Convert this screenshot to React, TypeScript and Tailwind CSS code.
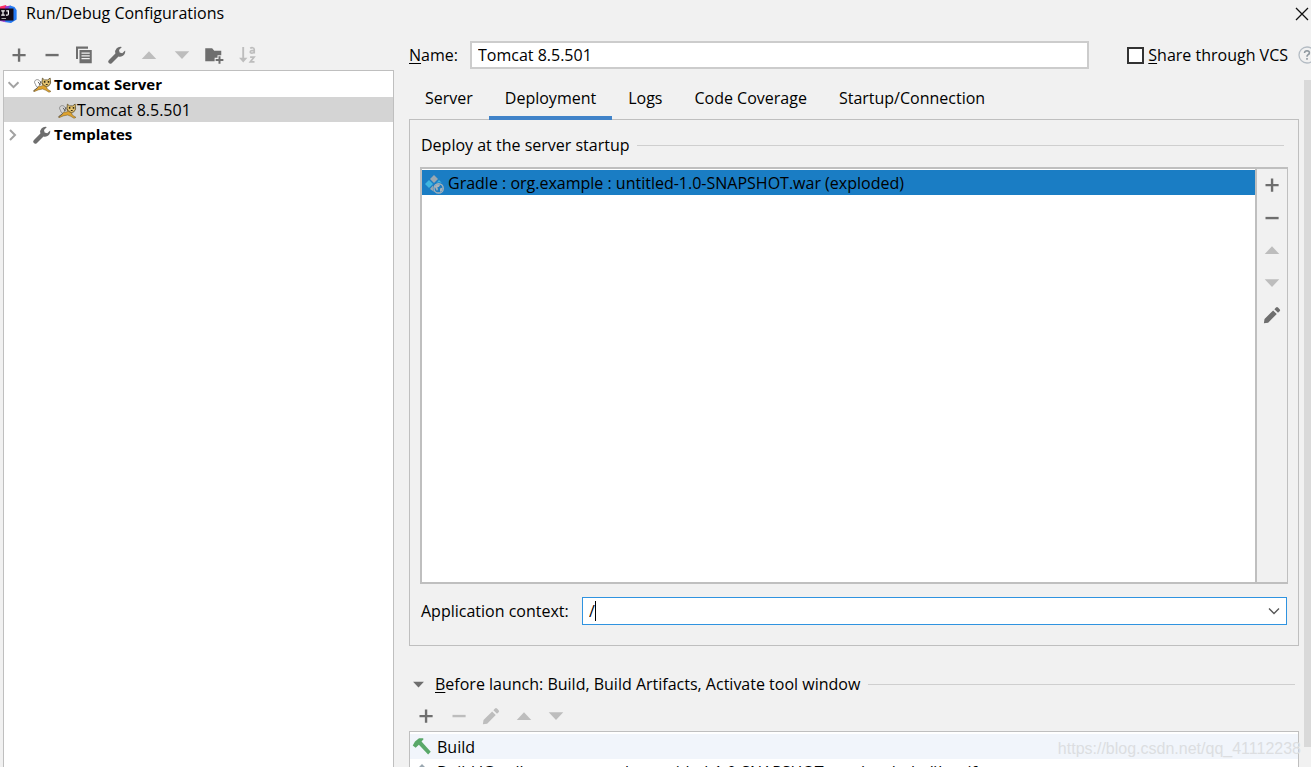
import { useState, type ReactNode } from "react";

type IconProps = { className?: string };

const Svg = ({ children, className = "size-5" }: { children: ReactNode; className?: string }) => (
  <svg viewBox="0 0 16 16" aria-hidden="true" className={"block shrink-0 " + className}>
    {children}
  </svg>
);

const PlusIcon = ({ className }: IconProps) => (
  <Svg className={className}>
    <path fill="currentColor" d="M7.1 2.8h1.9v4.3h4.3v1.9H9v4.3H7.1V9H2.8V7.1h4.3z" />
  </Svg>
);

const MinusIcon = ({ className }: IconProps) => (
  <Svg className={className}>
    <path fill="currentColor" d="M2.8 7.1h10.5V9H2.8z" />
  </Svg>
);

const CopyIcon = ({ className }: IconProps) => (
  <Svg className={className}>
    <path fill="currentColor" d="M1.6 1.2h9.6v1.7H3.2v8.2H1.6z" />
    <path
      fill="currentColor"
      fillRule="evenodd"
      d="M4.4 4h9.8v10.6H4.4zM6 6v1h6.6V6zM6 8.2v1h6.6v-1zM6 10.4v1h6.6v-1z"
    />
  </Svg>
);

const WrenchIcon = ({ className }: IconProps) => (
  <Svg className={className}>
    <path
      fill="currentColor"
      d="M14.5 4.3 12.2 6.5 10.1 6 9.6 3.900 11.900 1.600A4.200 4.200 0 0 0 6.700 6.800L1.400 12.100a1.700 1.700 0 0 0 2.400 2.400L9.200 9.200A4.200 4.200 0 0 0 14.500 4.300z"
    />
  </Svg>
);

const UpIcon = ({ className }: IconProps) => (
  <Svg className={className}>
    <path fill="currentColor" d="M8 5 13.800 11.200H2.200z" />
  </Svg>
);

const DownIcon = ({ className }: IconProps) => (
  <Svg className={className}>
    <path fill="currentColor" d="M2.200 5H13.800L8 11.200z" />
  </Svg>
);

const FolderAddIcon = ({ className }: IconProps) => (
  <Svg className={className}>
    <path fill="currentColor" d="M1 2.500h5.500L8.200 4.500H13.800V8.200H10.800V10.200H8.500V13H1z" />
    <path fill="currentColor" d="M11.600 9h1.600v2.200h2.300v1.600h-2.300V15h-1.600v-2.200H9.300v-1.600h2.300z" />
  </Svg>
);

const SortIcon = ({ className }: IconProps) => (
  <Svg className={className}>
    <path fill="currentColor" d="M4.200 1.500h1.500V10.200H8.300L5 14 1.600 10.200H4.200z" />
    <path
      fill="none"
      stroke="currentColor"
      strokeWidth="1.300"
      d="M10.600 2.700C11.300 2 13.800 1.700 13.800 3.500V6.800M13.800 4.300C11.500 4.200 10.600 4.700 10.600 5.500 10.600 6.900 13 6.800 13.800 5.500M10.500 9.700H13.700L10.600 13.500H14"
    />
  </Svg>
);

const PencilIcon = ({ className }: IconProps) => (
  <Svg className={className}>
    <path
      fill="currentColor"
      d="M1.500 14.500 2 11.200 8.900 4.300 11.800 7.200 4.900 14.100zM9.900 3.300 11.200 2Q12 1.200 12.800 2L14.100 3.300Q14.900 4.100 14.100 4.900L12.800 6.200z"
    />
  </Svg>
);

const TomcatIcon = ({ className }: IconProps) => (
  <Svg className={className}>
    <path d="M4.600 9.800C2.800 9.200 3.200 7.800 2.400 6.800 1.400 5.400 2.600 3.600 4.400 3.700 5.800 3.800 6.400 5.200 7.600 6.200" fill="none" stroke="#8a8a8a" strokeWidth=".8" />
    <path d="M7.800 6.500 8.600 8.500 5 9.200 4.200 10.600 1.200 12.600 1.700 13.300 5 11.900 8.500 11.200 11 12.200 13.600 13.800 15.200 13.100 12.200 11.200 11.600 9.300z" fill="#dfa32f" stroke="#6b5322" strokeWidth=".4" />
    <path d="M8.300 2.500 10 3.900H12.600L14.500 2.400 14.900 6.400 13.600 8.600 11.600 9.300 9.300 8.300 8 6.200z" fill="#e3c270" stroke="#54451f" strokeWidth=".6" />
    <path d="M4.800 5.500 6.800 8M7.200 5 5.800 8.500M1.200 12.800 4.600 9.900" fill="none" stroke="#555" strokeWidth=".7" />
    <path d="M9.500 4.800h1.200v1.300H9.500zM12.600 4.800h1.200v1.300h-1.200zM11.100 7.200h1.400v.8h-1.400z" fill="#332b16" />
  </Svg>
);

const ArtifactIcon = ({ className }: IconProps) => (
  <Svg className={className}>
    <path fill="#9aa7b0" d="M8 .8 11.200 4 8 7.200 4.800 4z" />
    <path fill="#40b6e0" d="M4 4.800 7.200 8 4 11.200 .8 8zM12 4.800 14.300 7.100Q12 6 10 7.100z" />
    <path fill="#9aa7b0" d="M7.200 9.200Q6.600 11.500 8 14.200L4.800 12z" />
    <circle cx="11.700" cy="11.500" r="3.700" fill="#1a7dc4" stroke="#a9b2b8" strokeWidth="1.100" />
    <path fill="#a9b2b8" d="M8.500 10 10.500 8.200 13 8.600 12 10.200 10.500 10.700 11.200 12 10.400 13.600zM12.800 11.600l2.200-.8-.6 2.500-1.600 1z" />
  </Svg>
);

const BuildArtifactIcon = ({ className }: IconProps) => (
  <Svg className={className}>
    <path fill="#9aa7b0" d="M8 .8 11.200 4 8 7.200 4.800 4zM8 8.800 11.200 12 8 15.200 4.800 12z" />
    <path fill="#40b6e0" d="M4 4.800 7.200 8 4 11.200 .8 8zM12 4.800 15.200 8 12 11.200 8.800 8z" />
  </Svg>
);

const HammerIcon = ({ className }: IconProps) => (
  <Svg className={className}>
    <path fill="#59a869" d="M.6 6 2.400 2.800 5.600 .2H8.900L9.200 .9 7.600 2.800 15 11 12.900 13.100 5.500 5.400 2.900 7.800z" />
  </Svg>
);

const AppLogo = () => (
  <svg viewBox="0 0 17 20" aria-hidden="true" className="block h-5 w-[17px] shrink-0">
    <path fill="#fc2d64" d="M0 2.500 6 1 8 6 4 18 0 15z" />
    <path fill="#8b3bd1" d="M5 2.500 10.500 1.500 12 7 5 7z" />
    <path fill="#2479f4" d="M10 1.600 14.500 3 16.600 6V15.500L11 19 4.500 18 3 14z" />
    <path fill="#a24be0" d="M0 14 5 15 5.500 18.200 0 17z" />
    <path fill="#120b16" d="M0 4.500h13.500v12H0z" />
    <path fill="none" stroke="#fff" strokeWidth="1.200" d="M1.200 6.800H4.800M3 6.800V11.200M1.200 11.200H4.800M6.200 6.800H9M8.400 6.800V10Q8.400 11.200 7.200 11.200H5.900" />
    <path fill="none" stroke="#aaa" strokeWidth="1" d="M1.500 14.500H6" />
  </svg>
);

const Chevron = ({ open }: { open?: boolean }) => (
  <svg viewBox="0 0 12 12" aria-hidden="true" className="block size-3 shrink-0 text-[#a2a2a2]">
    <path fill="none" stroke="currentColor" strokeWidth="2" d={open ? "M.5 3.200 5.500 8.200 10.500 3.200" : "M2 1 7 6 2 11"} />
  </svg>
);

function IconButton({ label, disabled, children }: { label: string; disabled?: boolean; children: ReactNode }) {
  return (
    <button
      type="button"
      aria-label={label}
      disabled={disabled}
      className="flex size-5 shrink-0 items-center justify-center text-[#6e6e6e] disabled:text-[#bdbdbd]"
    >
      {children}
    </button>
  );
}

const tabs = ["Server", "Deployment", "Logs", "Code Coverage", "Startup/Connection"];

export default function App() {
  const [tab, setTab] = useState("Deployment");
  const [name, setName] = useState("Tomcat 8.5.501");
  const [context, setContext] = useState("/");
  const [shared, setShared] = useState(false);

  return (
    <div className="relative flex h-screen flex-col overflow-hidden bg-[#f1f1f1] font-['Open_Sans','Noto_Sans',sans-serif] text-[16px] leading-[25px] text-black">
      <header className="flex h-[27px] shrink-0 items-center justify-between pr-px">
        <div className="flex items-center gap-[9px]">
          <AppLogo />
          <h1>Run/Debug Configurations</h1>
        </div>
        <button type="button" aria-label="Close" className="flex h-5 w-4 items-center justify-center">
          <svg viewBox="0 0 14 14" aria-hidden="true" className="size-[14px]">
            <path fill="none" stroke="#111" strokeWidth="1.300" d="M1 1 13 13M13 1 1 13" />
          </svg>
        </button>
      </header>

      <div className="flex min-h-0 flex-1">
        <aside className="flex w-[394px] shrink-0 flex-col pl-[3px]">
          <div className="flex h-[43px] w-[254px] shrink-0 items-center justify-between pt-[13px] pl-[6px]">
            <IconButton label="Add"><PlusIcon /></IconButton>
            <IconButton label="Remove"><MinusIcon /></IconButton>
            <IconButton label="Copy"><CopyIcon /></IconButton>
            <IconButton label="Edit templates"><WrenchIcon /></IconButton>
            <IconButton label="Move up" disabled><UpIcon /></IconButton>
            <IconButton label="Move down" disabled><DownIcon /></IconButton>
            <IconButton label="Create folder"><FolderAddIcon /></IconButton>
            <IconButton label="Sort" disabled><SortIcon /></IconButton>
          </div>
          <ul className="flex-1 border border-b-0 border-[#bfbfbf] bg-white pt-px">
            <li>
              <div className="flex h-[25px] items-center pl-1 text-[15px] font-bold">
                <Chevron open />
                <TomcatIcon className="mr-[2px] ml-3 size-5" />
                Tomcat Server
              </div>
              <div className="flex h-[25px] items-center bg-[#d4d4d4] pt-[2px] pl-[53px]">
                <TomcatIcon />
                Tomcat 8.5.501
              </div>
            </li>
            <li className="flex h-[25px] items-center pl-1 text-[15px] font-bold">
              <Chevron />
              <WrenchIcon className="mr-[2px] ml-3 size-5 text-[#6e6e6e]" />
              Templates
            </li>
          </ul>
        </aside>

        <main className="flex min-w-0 flex-1 flex-col pl-[15px]">
          <div className="mt-[14px] flex h-7 shrink-0 items-center">
            <label htmlFor="config-name" className="w-[61px] shrink-0">
              <span className="underline underline-offset-2">N</span>ame:
            </label>
            <input
              id="config-name"
              value={name}
              onChange={(e) => setName(e.target.value)}
              className="h-7 min-w-0 flex-1 border-2 border-[#cccccc] bg-white px-[6px] outline-none"
            />
            <label className="ml-[38px] flex shrink-0 items-center gap-1">
              <input
                type="checkbox"
                checked={shared}
                onChange={(e) => setShared(e.target.checked)}
                className="size-[17px] appearance-none border-2 border-[#333] bg-white checked:bg-[#333]"
              />
              <span><span className="underline underline-offset-2">S</span>hare through VCS</span>
            </label>
            <button type="button" aria-label="Help" className="ml-[10px] flex w-[13px] shrink-0 overflow-hidden">
              <svg viewBox="0 0 18 18" aria-hidden="true" className="size-[18px] shrink-0">
                <circle cx="9" cy="9" r="8" fill="none" stroke="#b4bcc4" strokeWidth="1.300" />
                <path fill="none" stroke="#8f989f" strokeWidth="1.600" d="M6.500 7Q6.700 4.800 9 4.800 11.500 4.900 11.400 7 11.200 8.200 9.900 8.900 9 9.500 9 10.800M9 12v1.700" />
              </svg>
            </button>
          </div>

          <div className="flex min-h-0 flex-1">
            <div className="flex min-w-0 flex-1 flex-col pt-2">
              <nav role="tablist" className="flex h-[43px] shrink-0">
                {tabs.map((t) => (
                  <button
                    key={t}
                    type="button"
                    role="tab"
                    aria-selected={t === tab}
                    onClick={() => setTab(t)}
                    className={
                      "border-b-4 px-4 pt-1 whitespace-nowrap " +
                      (t === tab ? "z-10 border-[#4083c9]" : "border-transparent")
                    }
                  >
                    {t}
                  </button>
                ))}
              </nav>

              <section className="-mt-px flex shrink-0 flex-col border border-[#bfbfbf] pt-[13px] pr-[10px] pb-5 pl-[10px]">
                <div className="flex h-[25px] items-center gap-[7px] pr-1 pl-px">
                  <h2>Deploy at the server startup</h2>
                  <span className="h-px flex-1 bg-[#cfcfcf]" />
                </div>
                <div className="mt-[9px] flex h-[417px] border-2 border-r border-[#bfbfbf]">
                  <ul className="flex-1 border-r-2 border-[#bfbfbf] bg-white pt-px">
                    <li className="flex h-[25px] items-center gap-1 bg-[#1a7dc4] pt-[2px] pl-[2px]">
                      <ArtifactIcon />
                      Gradle : org.example : untitled-1.0-SNAPSHOT.war (exploded)
                    </li>
                  </ul>
                  <div className="flex h-[156px] w-[30px] flex-col items-center justify-between pt-[6px]">
                    <IconButton label="Add artifact"><PlusIcon /></IconButton>
                    <IconButton label="Remove artifact"><MinusIcon /></IconButton>
                    <IconButton label="Move artifact up" disabled><UpIcon /></IconButton>
                    <IconButton label="Move artifact down" disabled><DownIcon /></IconButton>
                    <IconButton label="Edit artifact"><PencilIcon /></IconButton>
                  </div>
                </div>
                <div className="mt-[13px] flex h-7 items-center pr-px pl-px">
                  <label htmlFor="app-context" className="w-[161px] shrink-0">Application context:</label>
                  <div className="flex h-7 flex-1 items-center border border-[#2f93e0] bg-white pr-[6px] pl-[6px]">
                    <input
                      id="app-context"
                      value={context}
                      onChange={(e) => setContext(e.target.value)}
                      size={1}
                      className="min-w-[5px] [field-sizing:content] outline-none"
                    />
                    <span className="h-5 w-px bg-black" />
                    <button type="button" aria-label="Show contexts" className="ml-auto">
                      <svg viewBox="0 0 12 12" aria-hidden="true" className="size-3">
                        <path fill="none" stroke="#555" strokeWidth="1.300" d="M1 3.500 6 8.500 11 3.500" />
                      </svg>
                    </button>
                  </div>
                </div>
              </section>

              <div className="mt-[26px] flex h-[25px] shrink-0 items-center pr-1 pl-[2px]">
                <DownIcon className="mr-[9px] size-[15px] text-[#6e6e6e]" />
                <h2><span className="underline underline-offset-2">B</span>efore launch: Build, Build Artifacts, Activate tool window</h2>
                <span className="ml-2 h-px flex-1 bg-[#cfcfcf]" />
              </div>
              <div className="flex h-[34px] w-[157px] shrink-0 items-center justify-between pt-[3px] pl-[7px]">
                <IconButton label="Add task"><PlusIcon /></IconButton>
                <IconButton label="Remove task" disabled><MinusIcon /></IconButton>
                <IconButton label="Edit task" disabled><PencilIcon /></IconButton>
                <IconButton label="Move task up" disabled><UpIcon /></IconButton>
                <IconButton label="Move task down" disabled><DownIcon /></IconButton>
              </div>
              <ul className="min-h-0 flex-1 overflow-hidden border border-b-0 border-[#bfbfbf] bg-white pt-[2px] whitespace-nowrap">
                <li className="flex h-[25px] items-center gap-[5px] bg-[#f1f5fb] pt-[2px] pl-[2px]">
                  <HammerIcon />
                  Build
                </li>
                <li className="flex h-[25px] items-center gap-[5px] pt-[2px] pl-[2px]">
                  <BuildArtifactIcon />
                  Build 'Gradle : org.example : untitled-1.0-SNAPSHOT.war (exploded)' artifact
                </li>
              </ul>
            </div>
            <div className="w-3 shrink-0 pt-[11px] pb-5 pl-[5px]">
              <div className="h-full bg-[#d9d9d9]" />
            </div>
          </div>
        </main>
      </div>

      <p className="absolute right-[10px] bottom-[6px] font-['Liberation_Sans',sans-serif] text-[16px] text-[#dcdee1]">
        https://blog.csdn.net/qq_41112238
      </p>
    </div>
  );
}
